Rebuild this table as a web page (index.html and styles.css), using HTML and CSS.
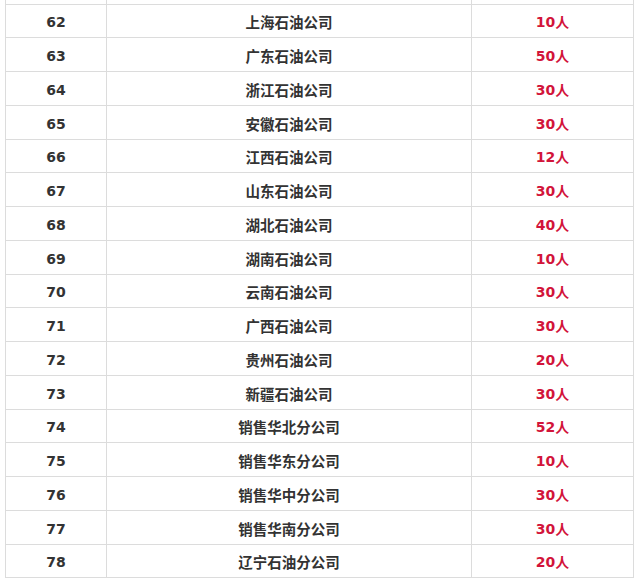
FILE: index.html
```html
<!DOCTYPE html>
<html lang="zh">
<head>
<meta charset="utf-8">
<link rel="stylesheet" href="styles.css">
</head>
<body>
<div class="wrap">
<table class="list">
<colgroup><col class="c1"><col class="c2"><col class="c3"></colgroup>
<tbody>
<tr class="cut"><td></td><td></td><td></td></tr>
<tr><td class="no">62</td><td class="name">上海石油公司</td><td class="num">10人</td></tr>
<tr><td class="no">63</td><td class="name">广东石油公司</td><td class="num">50人</td></tr>
<tr><td class="no">64</td><td class="name">浙江石油公司</td><td class="num">30人</td></tr>
<tr><td class="no">65</td><td class="name">安徽石油公司</td><td class="num">30人</td></tr>
<tr><td class="no">66</td><td class="name">江西石油公司</td><td class="num">12人</td></tr>
<tr><td class="no">67</td><td class="name">山东石油公司</td><td class="num">30人</td></tr>
<tr><td class="no">68</td><td class="name">湖北石油公司</td><td class="num">40人</td></tr>
<tr><td class="no">69</td><td class="name">湖南石油公司</td><td class="num">10人</td></tr>
<tr><td class="no">70</td><td class="name">云南石油公司</td><td class="num">30人</td></tr>
<tr><td class="no">71</td><td class="name">广西石油公司</td><td class="num">30人</td></tr>
<tr><td class="no">72</td><td class="name">贵州石油公司</td><td class="num">20人</td></tr>
<tr><td class="no">73</td><td class="name">新疆石油公司</td><td class="num">30人</td></tr>
<tr><td class="no">74</td><td class="name">销售华北分公司</td><td class="num">52人</td></tr>
<tr><td class="no">75</td><td class="name">销售华东分公司</td><td class="num">10人</td></tr>
<tr><td class="no">76</td><td class="name">销售华中分公司</td><td class="num">30人</td></tr>
<tr><td class="no">77</td><td class="name">销售华南分公司</td><td class="num">30人</td></tr>
<tr><td class="no">78</td><td class="name">辽宁石油分公司</td><td class="num">20人</td></tr>
</tbody>
</table>
</div>
</body>
</html>
```
FILE: styles.css
```css
html, body {
  margin: 0;
  padding: 0;
  background: #fff;
}
.wrap {
  padding-left: 5px;
}
.list {
  border-collapse: collapse;
  table-layout: fixed;
  width: 628px;
  font-family: "Noto Sans CJK SC", "DejaVu Sans", sans-serif;
}
.c1 { width: 101px; }
.c2 { width: 365px; }
.c3 { width: 162px; }
.list tr {
  height: 33.76px;
}
.list td {
  border: 1px solid #dcdcdc;
  border-top: none;
  padding: 3px 0 0;
  text-align: center;
  vertical-align: middle;
  font-weight: 700;
  line-height: 20px;
}
.list tr.cut {
  height: 4px;
}
.list tr.cut td {
  padding: 0;
  line-height: 0;
}
.list tr + tr td {
  border-top: 1px solid #dcdcdc;
}
.no {
  font-family: "DejaVu Sans", sans-serif;
  font-size: 14px;
  color: #333;
}
.name {
  font-size: 14.5px;
  color: #333;
}
.num {
  font-family: "DejaVu Sans", "Noto Sans CJK SC", sans-serif;
  font-size: 14px;
  color: #d2143a;
}
```
